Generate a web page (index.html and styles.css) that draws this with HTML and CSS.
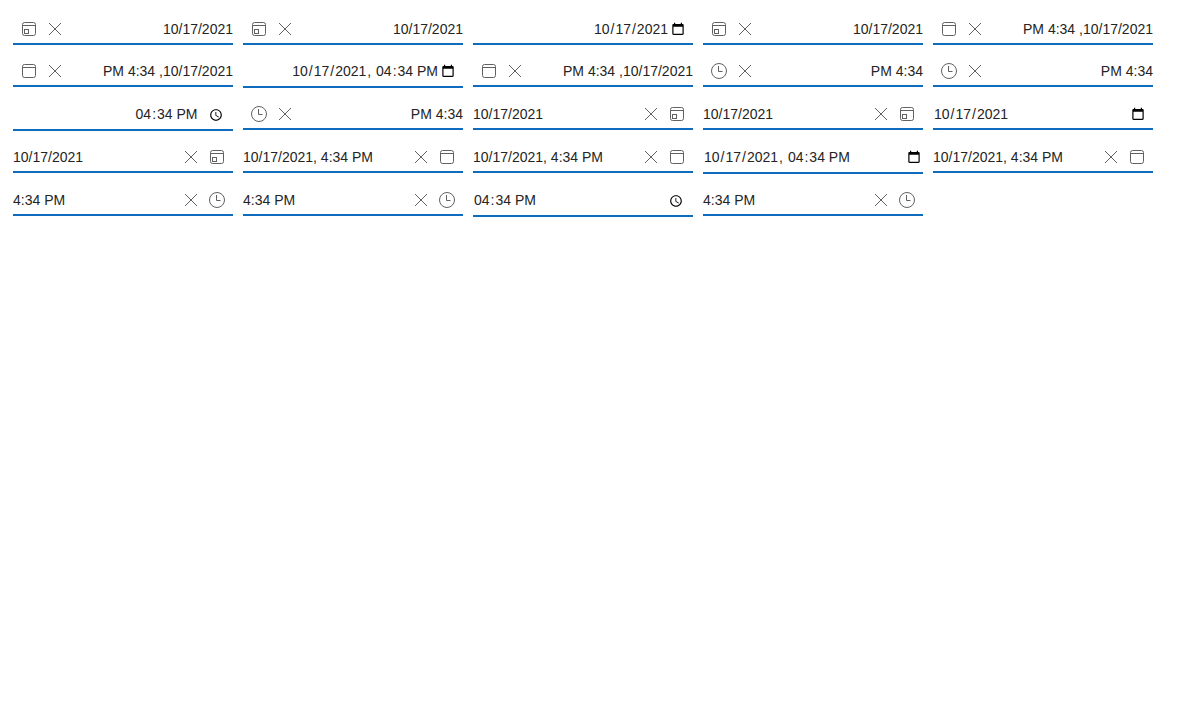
FILE: index.html
```
<!DOCTYPE html>
<html lang="en">
<head>
<meta charset="utf-8">
<title>Date boxes</title>
<link rel="stylesheet" href="styles.css">
</head>
<body>
<svg class="sprites" aria-hidden="true">
  <symbol id="date" viewBox="0 0 18 18"><g fill="none" stroke="#616161"><rect x="2.5" y="2.5" width="13" height="13" rx="2"/><path d="M2.5 5.5h13"/><rect x="4.5" y="9.5" width="4" height="4"/></g></symbol>
  <symbol id="calendar" viewBox="0 0 18 18"><g fill="none" stroke="#616161"><rect x="2.5" y="2.5" width="13" height="13" rx="2"/><path d="M2.5 5.5h13"/></g></symbol>
  <symbol id="clock" viewBox="0 0 18 18"><g fill="none" stroke="#616161"><circle cx="9" cy="9" r="7.5"/><path d="M8.5 4v5.500h4"/></g></symbol>
  <symbol id="clear" viewBox="0 0 18 18"><path d="M3 3l12 12M15 3L3 15" fill="none" stroke="#616161"/></symbol>
  <symbol id="native-date" viewBox="0 0 14 14"><path fill-rule="evenodd" d="M2.500 2H3V.8h1.200V2h5.600V.8H11V2h.500c.7 0 1.200.5 1.200 1.100v8.700c0 .6-.5 1.100-1.200 1.100h-9c-.7 0-1.200-.5-1.200-1.100V3.100C1.300 2.500 1.800 2 2.500 2zM2.500 4.800v7h9v-7z"/></symbol>
  <symbol id="native-time" viewBox="0 0 24 24"><path d="M11.990 2C6.470 2 2 6.480 2 12s4.470 10 9.990 10C17.520 22 22 17.520 22 12S17.520 2 11.990 2zM12 20c-4.420 0-8-3.580-8-8s3.580-8 8-8 8 3.580 8 8-3.580 8-8 8zm.5-13H11v6l5.250 3.150.75-1.230-4.500-2.670z"/></symbol>
</svg>
<main class="boxes">
  <div class="box rtl"><span class="value">10/17/2021</span><svg class="icon"><use href="#clear"/></svg><svg class="icon"><use href="#date"/></svg></div>
  <div class="box rtl"><span class="value">10/17/2021</span><svg class="icon"><use href="#clear"/></svg><svg class="icon"><use href="#date"/></svg></div>
  <div class="box native right"><span class="edit"><span class="field">10</span>/<span class="field">17</span>/<span class="field">2021</span></span><svg class="picker"><use href="#native-date"/></svg></div>
  <div class="box rtl"><span class="value">10/17/2021</span><svg class="icon"><use href="#clear"/></svg><svg class="icon"><use href="#date"/></svg></div>
  <div class="box rtl"><span class="value">PM 4:34 ,10/17/2021</span><svg class="icon"><use href="#clear"/></svg><svg class="icon"><use href="#calendar"/></svg></div>

  <div class="box rtl"><span class="value">PM 4:34 ,10/17/2021</span><svg class="icon"><use href="#clear"/></svg><svg class="icon"><use href="#calendar"/></svg></div>
  <div class="box native tall right"><span class="edit"><span class="field">10</span>/<span class="field">17</span>/<span class="field">2021</span>, <span class="field">04</span>:<span class="field">34</span> <span class="period">PM</span></span><svg class="picker"><use href="#native-date"/></svg></div>
  <div class="box rtl"><span class="value">PM 4:34 ,10/17/2021</span><svg class="icon"><use href="#clear"/></svg><svg class="icon"><use href="#calendar"/></svg></div>
  <div class="box rtl"><span class="value">PM 4:34</span><svg class="icon"><use href="#clear"/></svg><svg class="icon"><use href="#clock"/></svg></div>
  <div class="box rtl"><span class="value">PM 4:34</span><svg class="icon"><use href="#clear"/></svg><svg class="icon"><use href="#clock"/></svg></div>

  <div class="box native tall right time"><span class="edit"><span class="field">04</span>:<span class="field">34</span> <span class="period">PM</span></span><svg class="picker"><use href="#native-time"/></svg></div>
  <div class="box rtl"><span class="value">PM 4:34</span><svg class="icon"><use href="#clear"/></svg><svg class="icon"><use href="#clock"/></svg></div>
  <div class="box"><span class="value">10/17/2021</span><svg class="icon"><use href="#clear"/></svg><svg class="icon"><use href="#date"/></svg></div>
  <div class="box"><span class="value">10/17/2021</span><svg class="icon"><use href="#clear"/></svg><svg class="icon"><use href="#date"/></svg></div>
  <div class="box native"><span class="edit"><span class="field">10</span>/<span class="field">17</span>/<span class="field">2021</span></span><svg class="picker"><use href="#native-date"/></svg></div>

  <div class="box"><span class="value">10/17/2021</span><svg class="icon"><use href="#clear"/></svg><svg class="icon"><use href="#date"/></svg></div>
  <div class="box"><span class="value">10/17/2021, 4:34 PM</span><svg class="icon"><use href="#clear"/></svg><svg class="icon"><use href="#calendar"/></svg></div>
  <div class="box"><span class="value">10/17/2021, 4:34 PM</span><svg class="icon"><use href="#clear"/></svg><svg class="icon"><use href="#calendar"/></svg></div>
  <div class="box native tall edge"><span class="edit"><span class="field">10</span>/<span class="field">17</span>/<span class="field">2021</span>, <span class="field">04</span>:<span class="field">34</span> <span class="period">PM</span></span><svg class="picker"><use href="#native-date"/></svg></div>
  <div class="box"><span class="value">10/17/2021, 4:34 PM</span><svg class="icon"><use href="#clear"/></svg><svg class="icon"><use href="#calendar"/></svg></div>

  <div class="box"><span class="value">4:34 PM</span><svg class="icon"><use href="#clear"/></svg><svg class="icon"><use href="#clock"/></svg></div>
  <div class="box"><span class="value">4:34 PM</span><svg class="icon"><use href="#clear"/></svg><svg class="icon"><use href="#clock"/></svg></div>
  <div class="box native tall time"><span class="edit"><span class="field">04</span>:<span class="field">34</span> <span class="period">PM</span></span><svg class="picker"><use href="#native-time"/></svg></div>
  <div class="box"><span class="value">4:34 PM</span><svg class="icon"><use href="#clear"/></svg><svg class="icon"><use href="#clock"/></svg></div>
</main>
</body>
</html>
```
FILE: styles.css
```
body {
  margin: 0;
  background: #fff;
  color: #242424;
  font: 14px/16px "Liberation Sans", Arial, sans-serif;
}

.sprites {
  display: none;
}

.boxes {
  display: grid;
  grid-template-columns: repeat(5, 220px);
  gap: 12px 10px;
  align-items: start;
  padding: 15px 13px;
}

.box {
  box-sizing: border-box;
  display: flex;
  align-items: center;
  height: 30px;
  border-bottom: 2px solid #0f6cbd;
  white-space: nowrap;
}

.rtl {
  flex-direction: row-reverse;
}

.value {
  margin-inline-end: auto;
}

.rtl .value {
  margin: 0 0 0 auto;
}

.icon {
  width: 18px;
  height: 18px;
  margin: 0 4px;
}

.box:not(.rtl) .icon:last-child {
  margin-right: 7px;
}

.rtl .icon:last-child {
  margin-left: 7px;
}

.tall {
  height: 31px;
  padding-bottom: 1px;
}

.native {
  justify-content: space-between;
  padding-right: 8px;
}

.right {
  justify-content: flex-end;
}

.field {
  padding: 0 1px;
}

.period {
  margin-left: -1px;
  padding-right: 1px;
}

.picker {
  width: 14px;
  height: 14px;
  margin-left: 2px;
  fill: #000;
}

.edge {
  padding-right: 2px;
}

.time {
  padding-right: 10px;
}

.time .picker {
  margin-left: 10.5px;
  margin-top: 2px;
}
```
